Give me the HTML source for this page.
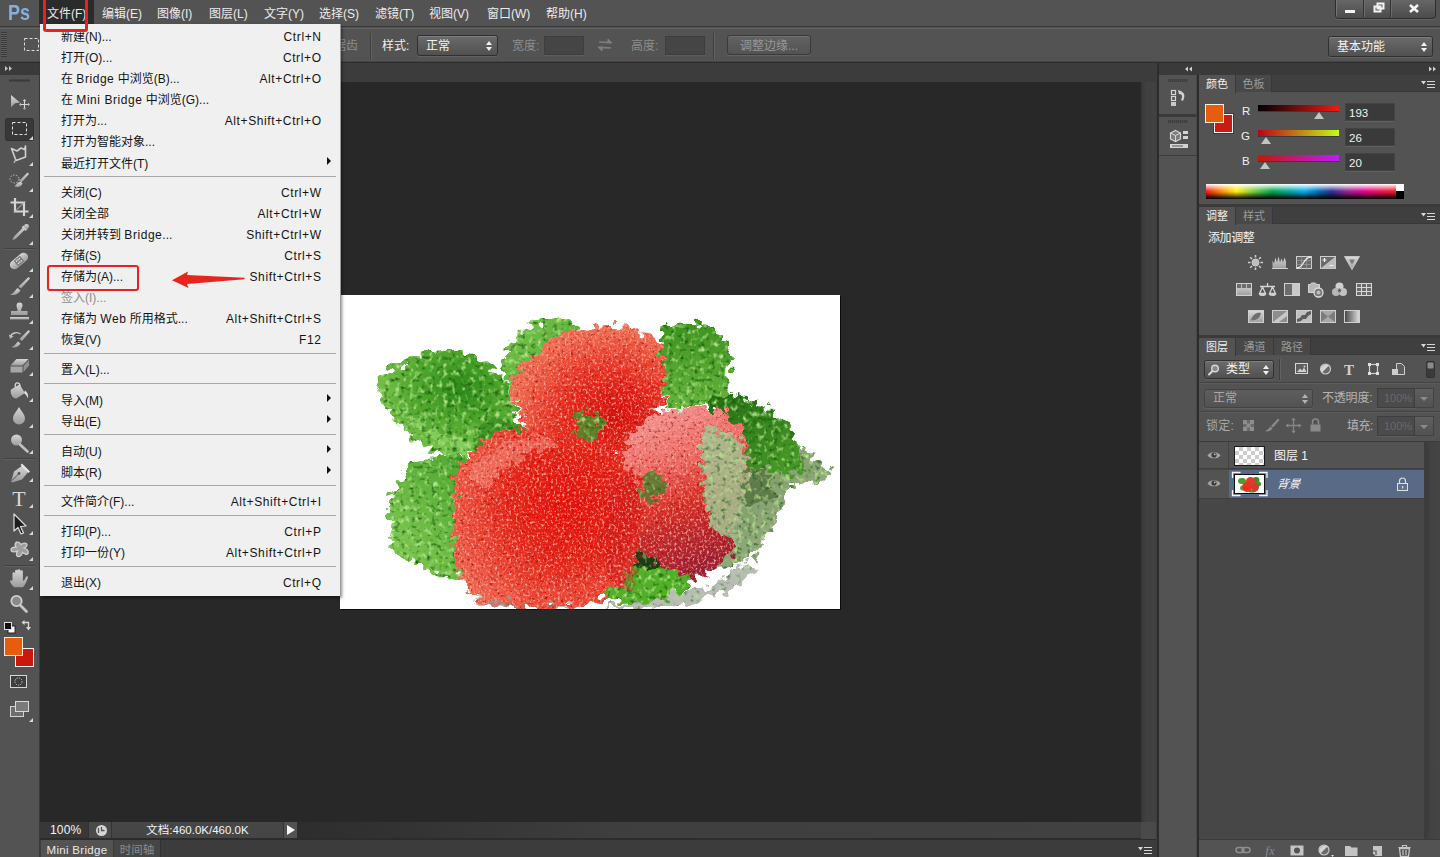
<!DOCTYPE html>
<html lang="zh-CN">
<head>
<meta charset="utf-8">
<title>Photoshop</title>
<style>
*{box-sizing:border-box;margin:0;padding:0}
html,body{width:1440px;height:857px;overflow:hidden;background:#535353}
body{position:relative;font-family:"Liberation Sans","Noto Sans CJK SC",sans-serif;font-size:12px;color:#e6e6e6;line-height:1}
.abs{position:absolute}
#menubar{position:absolute;left:0;top:0;width:1440px;height:27px;background:#535353;border-bottom:1px solid #3a3a3a}
#menubar .mi{position:absolute;top:1px;height:26px;line-height:26px;font-size:12px;color:#ececec;white-space:nowrap}
#optbar{position:absolute;left:0;top:28px;width:1440px;height:34px;background:#535353;border-top:1px solid #636363;border-bottom:1px solid #454545}
#optline{position:absolute;left:0;top:62px;width:1440px;height:1px;background:#2e2e2e}
#toolbar{position:absolute;left:0;top:63px;width:39px;height:794px;background:#535353}
#toolhead{position:absolute;left:0;top:63px;width:39px;height:12px;background:#3a3a3a}
#tabstrip{position:absolute;left:40px;top:63px;width:1116px;height:19px;background:#3c3c3c}
#canvas{position:absolute;left:40px;top:82px;width:1101px;height:740px;background:#282828}
#vscroll{position:absolute;left:1141px;top:82px;width:15px;height:740px;background:linear-gradient(90deg,#363636,#414141 5px,#414141)}
#statusbar{position:absolute;left:40px;top:822px;width:1116px;height:17px;background:#424242}
#bottomtabs{position:absolute;left:40px;top:839px;width:1116px;height:18px;background:#3a3a3a}
#docimg{position:absolute;left:340px;top:295px;width:500px;height:314px;background:#fff;box-shadow:1px 1px 0 #0c0c0c}
#dockgap{position:absolute;left:1156px;top:63px;width:3px;height:794px;background:#2c2c2c;border-left:1px solid #3e3e3e}
#dockhead{position:absolute;left:1159px;top:63px;width:281px;height:12px;background:#3a3a3a}
#iconcol{position:absolute;left:1159px;top:75px;width:37px;height:782px;background:#535353}
#dockgap2{position:absolute;left:1196px;top:75px;width:3px;height:782px;background:#2c2c2c;border-left:1px solid #484848}
#panels{position:absolute;left:1199px;top:75px;width:241px;height:782px;background:#535353}
#filemenu{position:absolute;left:40px;top:24px;width:300px;height:572px;background:#f0f0f0;box-shadow:1px 0 0 #9a9a9a, 2px 2px 3px rgba(0,0,0,.45);color:#111;font-size:12px}
#filemenu .it{position:absolute;left:21px;height:21px;line-height:21px;white-space:nowrap;color:#141414}
#filemenu .sc{position:absolute;right:18.400px;letter-spacing:.62px;height:21px;line-height:21px;white-space:nowrap;text-align:right;color:#141414}
#filemenu .sep{position:absolute;left:4px;right:4px;height:1px;background:#a8a8a8}
#filemenu .l{letter-spacing:.55px}
#filemenu .arr{position:absolute;right:9px;width:0;height:0;border-left:4px solid #111;border-top:4px solid transparent;border-bottom:4px solid transparent}
</style>
</head>
<body>
<div id="menubar">
  <div class="abs" style="left:8px;top:1px;font-size:22px;font-weight:bold;color:#86b0dc;line-height:24px;transform:scaleX(.82);transform-origin:0 0;font-family:'Liberation Sans',sans-serif">Ps</div>
  <div class="abs" style="left:39px;top:0;width:55px;height:24px;background:#2b2b2b"></div>
  <div class="mi" style="left:47px">文件(F)</div>
  <div class="mi" style="left:102px">编辑(E)</div>
  <div class="mi" style="left:157px">图像(I)</div>
  <div class="mi" style="left:209px">图层(L)</div>
  <div class="mi" style="left:264px">文字(Y)</div>
  <div class="mi" style="left:319px">选择(S)</div>
  <div class="mi" style="left:375px">滤镜(T)</div>
  <div class="mi" style="left:429px">视图(V)</div>
  <div class="mi" style="left:487px">窗口(W)</div>
  <div class="mi" style="left:546px">帮助(H)</div>
</div>
<div id="optbar"></div>
<div id="optline"></div>
<div id="toolbar"></div>
<div id="toolhead"></div>
<div id="tabstrip"></div>
<div id="canvas"></div>
<div id="vscroll"></div>
<div id="statusbar"></div>
<div id="bottomtabs"></div>
<div id="dockgap"></div>
<div id="dockhead"></div>
<div id="iconcol"></div>
<div id="dockgap2"></div>
<div id="panels"></div>
<style>
.sel{position:absolute;border:1px solid #303030;border-radius:2.500px;background:linear-gradient(#6b6b6b,#505050);box-shadow:inset 0 1px 0 #7e7e7e,0 1px 0 #626262;color:#f2f2f2;font-size:12px;white-space:nowrap}
.sel .ud{position:absolute;right:5px;top:50%;width:6px;height:10px;margin-top:-5px}
.sel .ud:before{content:"";position:absolute;left:0;top:0;border-left:3px solid transparent;border-right:3px solid transparent;border-bottom:4px solid #f0f0f0}
.sel .ud:after{content:"";position:absolute;left:0;bottom:0;border-left:3px solid transparent;border-right:3px solid transparent;border-top:4px solid #f0f0f0}
.inp{position:absolute;background:#454545;border:1px solid #3e3e3e;box-shadow:0 1px 0 #5e5e5e}
.vsep{position:absolute;width:2px;border-left:1px solid #3f3f3f;border-right:1px solid #626262}
.lbl{position:absolute;white-space:nowrap;font-size:12px;line-height:14px}
.dis{color:#8d8d8d}
.winbtns{position:absolute;left:1335px;top:0;width:101px;height:19px;border:1px solid #2d2d2d;border-top:none;border-radius:0 0 4px 4px;background:linear-gradient(#666,#4b4b4b);box-shadow:0 1px 0 #646464,inset 1px 0 0 #757575}
.winbtns i{position:absolute;top:0;width:1px;height:17px;background:#333;box-shadow:1px 0 0 #6c6c6c}
</style>
<!-- window buttons -->
<div class="winbtns">
  <i style="left:27px"></i><i style="left:54px"></i>
  <svg class="abs" style="left:0;top:0" width="100" height="18" viewBox="0 0 100 18">
    <rect x="9" y="10" width="10" height="3" fill="#f4f4f4"/>
    <path d="M38.5 6.5h6v5h-6zM41.5 3.5h6v5h-6z" fill="none" stroke="#f4f4f4" stroke-width="2"/>
    <path d="M74 5l8 7M82 5l-8 7" stroke="#f4f4f4" stroke-width="2.6" fill="none"/>
  </svg>
</div>
<!-- options bar content -->
<div class="abs" style="left:1px;top:32px;width:6px;height:25px;background:repeating-linear-gradient(#3a3a3a 0 1px,#5c5c5c 1px 2px)"></div>
<svg class="abs" style="left:22px;top:36px" width="18" height="18" viewBox="0 0 18 18"><rect x="2.5" y="2.5" width="14" height="12" fill="none" stroke="#dcdcdc" stroke-width="1" stroke-dasharray="3 2"/></svg>
<div class="lbl dis" style="left:334px;top:39px">锯齿</div>
<div class="vsep" style="left:370px;top:33px;height:26px"></div>
<div class="lbl" style="left:382px;top:39px;color:#f0f0f0">样式:</div>
<div class="sel" style="left:417px;top:35px;width:81px;height:21px;line-height:21px;padding-left:8px">正常<span class="ud"></span></div>
<div class="lbl dis" style="left:512px;top:39px">宽度:</div>
<div class="inp" style="left:544px;top:36px;width:40px;height:19px"></div>
<svg class="abs" style="left:596px;top:37px" width="18" height="16" viewBox="0 0 18 16"><path d="M3 5h9V2l4 4-4 0zM15 11H6v3l-4-4 4 0z" fill="#7e7e7e" stroke="#7e7e7e" stroke-width="1"/></svg>
<div class="lbl dis" style="left:631px;top:39px">高度:</div>
<div class="inp" style="left:665px;top:36px;width:40px;height:19px"></div>
<div class="vsep" style="left:713px;top:33px;height:26px"></div>
<div class="abs" style="left:727px;top:35px;width:84px;height:20px;border:1px solid #3a3a3a;border-radius:3px;background:linear-gradient(#626262,#535353);box-shadow:0 1px 0 #626262,inset 0 1px 0 #707070;color:#979797;font-size:12px;line-height:20px;text-align:center;white-space:nowrap">调整边缘...</div>
<div class="sel" style="left:1328px;top:36px;width:105px;height:21px;line-height:21px;padding-left:8px">基本功能<span class="ud"></span></div>
<!-- left toolbar -->
<svg class="abs" style="left:0;top:63px" width="40" height="794" viewBox="0 63 40 794">
  <defs>
    <path id="corner" d="M0 0v-4l-4 4z" fill="#d8d8d8"/>
    <linearGradient id="icg" x1="0" y1="0" x2="0" y2="1"><stop offset="0" stop-color="#d6d6d6"/><stop offset="1" stop-color="#9c9c9c"/></linearGradient>
  </defs>
  <!-- header arrows -->
  <path d="M5 66l3 2.500-3 2.500zM9 66l3 2.500-3 2.500z" fill="#c4c4c4"/>
  <!-- right border -->
  <rect x="39" y="63" width="1" height="794" fill="#3a3a3a"/>
  <!-- grip -->
  <rect x="9" y="79" width="21" height="3" fill="#454545"/>
  <rect x="9" y="80" width="21" height="1" fill="#3a3a3a"/>
  <!-- selected tool bg -->
  <rect x="5" y="118" width="29" height="23" rx="3" fill="#383838"/>
  <rect x="5.5" y="118.5" width="28" height="22" rx="3" fill="none" stroke="#303030"/>
  <!-- separators -->
  <g fill="#414141"><rect x="4" y="248" width="31" height="1"/><rect x="4" y="458" width="31" height="1"/><rect x="4" y="565" width="31" height="1"/></g>
  <g fill="#606060"><rect x="4" y="249" width="31" height="1"/><rect x="4" y="459" width="31" height="1"/><rect x="4" y="566" width="31" height="1"/></g>
  <g fill="url(#icg)" stroke="none">
    <!-- move -->
    <path d="M11 95l9 7.5-5 .8-4 4z"/>
    <path d="M24.5 100v9M20 104.500h9" stroke="#d6d6d6" stroke-width="1.2" fill="none"/>
    <path d="M24.500 99l1.800 2h-3.600zM24.500 110l1.800-2h-3.600zM19 104.500l2-1.800v3.600zM30 104.500l-2-1.800v3.600z"/>
    <!-- marquee -->
    <rect x="12.500" y="122.500" width="14" height="12" fill="none" stroke="#e0e0e0" stroke-dasharray="3 2"/>
    <use href="#corner" x="33" y="140"/>
    <!-- lasso -->
    <path d="M11.500 148.500l5.500 2.500 4-3 3.500 1.500 1-3.500 0 11-9.500 3.500z" fill="none" stroke="#cfcfcf" stroke-width="1.600" stroke-linejoin="round"/>
    <path d="M16 159l-2 4" stroke="#bdbdbd" stroke-width="1.300" fill="none"/>
    <use href="#corner" x="33" y="166"/>
    <!-- quick select -->
    <ellipse cx="14.500" cy="179" rx="4.500" ry="4" fill="none" stroke="#c4c4c4" stroke-dasharray="1.500 1.500"/>
    <path d="M27.500 172.500l1.500 1.500-7.500 8.500-2.500-1.500z"/>
    <path d="M14.500 186.500c2-3 4-5 6.500-4.500l1.500 1.500c-1 3-4 4-8 3z"/>
    <use href="#corner" x="33" y="192"/>
    <!-- crop -->
    <path d="M15 198v13.500h13.500M10.500 202.500h13.500v13.500" fill="none" stroke="#d4d4d4" stroke-width="2.200"/>
    <path d="M14 212.500l11-11" stroke="#bcbcbc" stroke-width="1" fill="none"/>
    <use href="#corner" x="33" y="218"/>
    <!-- eyedropper -->
    <path d="M24 225.500l3.500 3.500-2 2-1-1-8.500 8.500-3 1.500-.5-.5 1.500-3 8.500-8.500-1-1z"/>
    <circle cx="26.500" cy="226.500" r="2.400"/>
    <use href="#corner" x="33" y="245"/>
    <!-- healing brush (bandage) -->
    <g transform="rotate(-40 19 261)"><rect x="8.500" y="256.500" width="21" height="9" rx="4.500"/><rect x="15" y="257.500" width="8" height="7" fill="#7a7a7a"/><g fill="#e2e2e2"><circle cx="17" cy="259.500" r=".8"/><circle cx="19" cy="259.500" r=".8"/><circle cx="21" cy="259.500" r=".8"/><circle cx="17" cy="262.500" r=".8"/><circle cx="19" cy="262.500" r=".8"/><circle cx="21" cy="262.500" r=".8"/></g></g>
    <use href="#corner" x="33" y="272"/>
    <!-- brush -->
    <path d="M28.500 277l1.500 1.500-9 10-2.500-2z"/>
    <path d="M10 294.500c3-.5 4.500-3.500 7.500-6.500l3 2.500c-2 3.500-6 5.500-10.500 4z"/>
    <use href="#corner" x="33" y="298"/>
    <!-- stamp -->
    <path d="M16.500 305.500a3 3 0 1 1 6 0c0 2-1.500 3-1.500 5.500h6.500v4h-16.500v-4h6.500c0-2.500-1-3.500-1-5.500z"/>
    <rect x="10" y="317" width="19" height="2.500"/>
    <use href="#corner" x="33" y="324"/>
    <!-- history brush -->
    <path d="M28.500 330l1.500 1.500-8 9.500-2.500-2z"/>
    <path d="M11.500 347c3-.5 4-3 6.500-5.500l2.500 2c-1.500 3-5 5-9 3.500z"/>
    <path d="M10.500 337a6 5 0 0 1 10-3" fill="none" stroke="#c8c8c8" stroke-width="1.400"/>
    <path d="M9 334.500l1 4.500 3.500-2.500z"/>
    <use href="#corner" x="33" y="350"/>
    <!-- eraser -->
    <path d="M10.500 365.500l6-6.500h12l-6 6.500z"/>
    <path d="M10.500 366.500h12v6h-12z" fill="#a6a6a6"/>
    <path d="M23.500 366l5.500-6v5.500l-5.500 6.500z" fill="#8f8f8f"/>
    <use href="#corner" x="33" y="376"/>
    <!-- paint bucket -->
    <path d="M11 389.500l8.500-5 5.500 8.500-8.500 5.500c-3 1-7-5-5.500-9z"/>
    <path d="M15.500 387.500c-2-6 5-6 4.500-1" fill="none" stroke="#d8d8d8" stroke-width="1.300"/>
    <path d="M25 390.500c2.500 1.500 3.500 4.500 3 8-1-2.500-2.500-4.500-4-5.500z" fill="#dedede"/>
    <use href="#corner" x="33" y="402"/>
    <!-- blur drop -->
    <path d="M19 407c2.500 4.500 6 7.500 6 11.500a6 6 0 0 1-12 0c0-4 3.500-7 6-11.500z"/>
    <use href="#corner" x="33" y="428"/>
    <!-- dodge -->
    <circle cx="16.500" cy="440" r="5.500"/>
    <path d="M20 444.500l7.500 7" stroke="#c2c2c2" stroke-width="2.600" fill="none" stroke-linecap="round"/>
    <use href="#corner" x="33" y="454"/>
    <!-- pen -->
    <path d="M11 481.500l3-10 8.500-6 6 6-6.500 8-10 3z"/>
    <path d="M11 481.500l7.500-7.500" stroke="#555" stroke-width="1" fill="none"/>
    <circle cx="19" cy="473.500" r="1.400" fill="#555"/>
    <path d="M22 463.500l8 8-1.500 1.500-8-8z" fill="#e6e6e6"/>
    <use href="#corner" x="33" y="482"/>
    <!-- shape (custom blob) -->
    <path d="M16 543c2-2 4 0 5 1.500 2-2 6-2 6 .5 0 2-2 2.500-3 3 3 1 5 3 4 5.500-1.500 2-4 0-5.500-1-.5 3-3.500 5-5.500 3.500-1.500-1.500 0-3.500 .5-5-2 1-6 1.500-6.500-1-.5-2.500 3-3 5-3-1-1.500-1.500-3 0-4.500z" fill="#9e9e9e" stroke="#cfcfcf" stroke-width="1.300"/>
    <use href="#corner" x="33" y="561"/>
    <!-- hand -->
    <path d="M13.500 580.500v-7a1.300 1.300 0 0 1 2.600 0v-2.500a1.300 1.300 0 0 1 2.600 0v-.5a1.300 1.300 0 0 1 2.600 0v1a1.300 1.300 0 0 1 2.600 0v7.500c0 3.500 1.500 1.500 3-2 .8-1.500 2.500-.8 2 .8-1.500 4-2.500 7-5 9.500h-8.500c-2.500-2-4.500-5-4.500-6.800z" transform="translate(-1 0)"/>
    <use href="#corner" x="33" y="590"/>
    <!-- zoom -->
    <circle cx="16.500" cy="601" r="5.200" fill="#8a8a8a" stroke="#cfcfcf" stroke-width="1.800"/>
    <path d="M20.500 605.500l6 6" stroke="#c6c6c6" stroke-width="2.800" fill="none" stroke-linecap="round"/>
  </g>
  <!-- type tool -->
  <text x="19" y="506" font-family="Liberation Serif,serif" font-size="22" fill="#d8d8d8" text-anchor="middle">T</text>
  <use href="#corner" x="33" y="508"/>
  <!-- path selection arrow -->
  <path d="M14 514v17l4-3.500 3 6.500 2.500-1-3-6.500 5.500-.5z" fill="#1c1c1c" stroke="#dcdcdc" stroke-width="1.200" stroke-linejoin="round"/>
  <use href="#corner" x="33" y="535"/>
  <!-- default colours / swap -->
  <rect x="8" y="626" width="7" height="7" fill="#fff" stroke="#222" stroke-width="1"/>
  <rect x="4.500" y="622.500" width="7" height="7" fill="#111" stroke="#ddd" stroke-width="1"/>
  <path d="M24 622.500h4.500v5" fill="none" stroke="#d8d8d8" stroke-width="1.300"/>
  <path d="M24.500 620l-3 2.500 3 2.500zM26 627l2.500 3.500 2.500-3.500z" fill="#d8d8d8"/>
  <!-- bg / fg colour -->
  <rect x="15.500" y="648.500" width="18" height="18" fill="#c9190f" stroke="#f2f2f2"/>
  <rect x="16.500" y="649.500" width="16" height="16" fill="none" stroke="#2a2a2a" stroke-width="0"/>
  <rect x="4.500" y="637.500" width="18" height="18" fill="#e85c0d" stroke="#f4e6d8"/>
  <!-- quick mask -->
  <rect x="10.500" y="675.500" width="16" height="12" fill="#3e3e3e" stroke="#d6d6d6"/>
  <circle cx="18.500" cy="681.500" r="3.600" fill="none" stroke="#d0d0d0" stroke-dasharray="1.200 1.200"/>
  <!-- screen mode -->
  <rect x="10.500" y="706.500" width="13" height="10" fill="#6e6e6e" stroke="#d2d2d2"/>
  <rect x="15.500" y="701.500" width="13" height="10" fill="#7a7a7a" stroke="#dadada"/>
  <use href="#corner" x="33" y="722"/>
</svg>
<!-- status bar -->
<div class="abs" style="left:297px;top:822px;width:844px;height:17px;background:linear-gradient(90deg,#2d2d2d,#3f3f3f 40%,#414141)"></div>
<div class="abs" style="left:40px;top:822px;width:48px;height:17px;background:#383838;color:#f4f4f4;font-size:12px;line-height:16px;padding-left:10px;letter-spacing:.2px">100%</div>
<div class="abs" style="left:88px;top:822px;width:24px;height:17px;background:#4a4a4a;border-left:1px solid #333;border-right:1px solid #333"></div>
<svg class="abs" style="left:95px;top:824px" width="13" height="13" viewBox="0 0 13 13"><circle cx="6.500" cy="6.500" r="5.500" fill="#d6d6d6"/><path d="M6.500 3v3.500h3" stroke="#555" stroke-width="1.300" fill="none"/><path d="M3.500 4v5" stroke="#555" stroke-width="1.300"/></svg>
<div class="abs" style="left:112px;top:822px;width:171px;height:17px;background:#464646;color:#f4f4f4;font-size:11.500px;line-height:17px;text-align:center;white-space:nowrap">文档:460.0K/460.0K</div>
<div class="abs" style="left:283px;top:822px;width:14px;height:17px;background:#525252;border-left:1px solid #333"></div>
<div class="abs" style="left:287px;top:825px;width:0;height:0;border-left:8px solid #f6f6f6;border-top:5.500px solid transparent;border-bottom:5.500px solid transparent"></div>
<div class="abs" style="left:40px;top:838px;width:1116px;height:2px;background:#2c2c2c"></div>
<!-- bottom tabs -->
<div class="abs" style="left:40px;top:840px;width:1116px;height:17px;background:#3c3c3c"></div>
<div class="abs" style="left:41px;top:840px;width:72px;height:17px;background:#535353;color:#e8e8e8;font-size:11.500px;line-height:21px;text-align:center;white-space:nowrap;letter-spacing:.3px">Mini Bridge</div>
<div class="abs" style="left:114px;top:840px;width:47px;height:17px;background:#464646;color:#8c8c8c;font-size:11.500px;line-height:21px;text-align:center;white-space:nowrap;border-right:1px solid #333">时间轴</div>
<svg class="abs" style="left:1138px;top:846px" width="14" height="9" viewBox="0 0 14 9"><path d="M0 1h5l-2.500 3.500z" fill="#d8d8d8"/><path d="M6 1.500h8M6 4.500h8M6 7.500h8" stroke="#d8d8d8" stroke-width="1.200"/></svg>
<div class="abs" style="left:1141px;top:822px;width:15px;height:17px;background:#4a4a4a"></div>
<div id="docimg"></div>
<svg class="abs" style="left:340px;top:295px" width="500" height="314" viewBox="340 295 500 314">
  <defs>
    <filter id="glassL" x="340" y="295" width="500" height="314" filterUnits="userSpaceOnUse" color-interpolation-filters="sRGB">
      <feTurbulence type="fractalNoise" baseFrequency="0.035" numOctaves="2" seed="4" result="n1"/>
      <feDisplacementMap in="SourceGraphic" in2="n1" scale="14" xChannelSelector="R" yChannelSelector="G" result="d1"/>
      <feTurbulence type="fractalNoise" baseFrequency="0.13 0.16" numOctaves="1" seed="11" result="n2"/>
      <feDisplacementMap in="d1" in2="n2" scale="24" xChannelSelector="G" yChannelSelector="R" result="d2"/>
      <feTurbulence type="fractalNoise" baseFrequency="0.21 0.17" numOctaves="2" seed="7" result="g"/>
      <feColorMatrix in="g" type="matrix" values="0 0 0 0 .72  0 0 0 0 .9  0 0 0 0 .55  0 0 0 3.0 -1.6" result="ga"/>
      <feComposite in="ga" in2="d2" operator="in" result="gm"/>
      <feTurbulence type="fractalNoise" baseFrequency="0.19 0.23" numOctaves="2" seed="23" result="g2"/>
      <feColorMatrix in="g2" type="matrix" values="0 0 0 0 .08  0 0 0 0 .36  0 0 0 0 .05  0 0 0 2.8 -1.55" result="gb"/>
      <feComposite in="gb" in2="d2" operator="in" result="gd"/>
      <feMerge><feMergeNode in="d2"/><feMergeNode in="gd"/><feMergeNode in="gm"/></feMerge>
    </filter>
    <filter id="glassB" x="340" y="295" width="500" height="314" filterUnits="userSpaceOnUse" color-interpolation-filters="sRGB">
      <feTurbulence type="fractalNoise" baseFrequency="0.035" numOctaves="2" seed="4" result="n1"/>
      <feDisplacementMap in="SourceGraphic" in2="n1" scale="14" xChannelSelector="R" yChannelSelector="G" result="d1"/>
      <feTurbulence type="fractalNoise" baseFrequency="0.13 0.16" numOctaves="1" seed="11" result="n2"/>
      <feDisplacementMap in="d1" in2="n2" scale="24" xChannelSelector="G" yChannelSelector="R" result="d2"/>
      <feTurbulence type="fractalNoise" baseFrequency="0.43 0.37" numOctaves="2" seed="9" result="g"/>
      <feColorMatrix in="g" type="matrix" values="0 0 0 0 .98  0 0 0 0 .66  0 0 0 0 .6  0 0 0 3.2 -1.62" result="ga"/>
      <feComposite in="ga" in2="d2" operator="in" result="gm"/>
      <feTurbulence type="fractalNoise" baseFrequency="0.31 0.36" numOctaves="2" seed="31" result="g2"/>
      <feColorMatrix in="g2" type="matrix" values="0 0 0 0 .62  0 0 0 0 .04  0 0 0 0 .04  0 0 0 2.8 -1.6" result="gb"/>
      <feComposite in="gb" in2="d2" operator="in" result="gd"/>
      <feMerge><feMergeNode in="d2"/><feMergeNode in="gd"/><feMergeNode in="gm"/></feMerge>
    </filter>
    <radialGradient id="leafA" cx="0.62" cy="0.35" r="0.75"><stop offset="0" stop-color="#2c8a1a"/><stop offset=".45" stop-color="#4fa62c"/><stop offset="1" stop-color="#8ad05a"/></radialGradient>
    <linearGradient id="leafB" x1="1" y1="0" x2="0" y2="1"><stop offset="0" stop-color="#4aa22a"/><stop offset="1" stop-color="#84cc58"/></linearGradient>
    <linearGradient id="leafC" x1="0" y1="0" x2="1" y2="1"><stop offset="0" stop-color="#7cc850"/><stop offset="1" stop-color="#4a9e2c"/></linearGradient>
    <linearGradient id="leafD" x1="0" y1="0" x2="0" y2="1"><stop offset="0" stop-color="#3d9220"/><stop offset="1" stop-color="#66b43c"/></linearGradient>
    <linearGradient id="leafE" x1="0" y1="0" x2="1" y2="1"><stop offset="0" stop-color="#226f12"/><stop offset="1" stop-color="#4c9c2a"/></linearGradient>
    <radialGradient id="sTop" cx="0.66" cy="0.72" r="0.75"><stop offset="0" stop-color="#d4100c"/><stop offset=".4" stop-color="#e6281c"/><stop offset=".8" stop-color="#ee5c44"/><stop offset="1" stop-color="#f0785c"/></radialGradient>
    <radialGradient id="sFront" cx="0.62" cy="0.42" r="0.7"><stop offset="0" stop-color="#e8100a"/><stop offset=".45" stop-color="#e62418"/><stop offset=".85" stop-color="#ee5440"/><stop offset="1" stop-color="#f06a52"/></radialGradient>
    <linearGradient id="sRight" x1="0.2" y1="0" x2="0.5" y2="1"><stop offset="0" stop-color="#f29a98"/><stop offset=".35" stop-color="#ee6c66"/><stop offset=".6" stop-color="#d83028"/><stop offset="1" stop-color="#9a2034"/></linearGradient>
    <linearGradient id="grey" x1="0" y1="0" x2="1" y2="1"><stop offset="0" stop-color="#9cc488"/><stop offset=".5" stop-color="#86a070"/><stop offset="1" stop-color="#a8b898"/></linearGradient>
  </defs>
  <g filter="url(#glassL)">
    <!-- leaves -->
    <path d="M376 389C384 366 404 355 430 354C456 348 486 356 499 372C513 386 517 405 508 421C500 432 492 440 480 446C466 456 446 458 434 450C414 440 395 421 385 408Z" fill="url(#leafA)"/>
    <path d="M400 412C420 430 445 445 470 452L470 440C440 435 415 420 395 400Z" fill="#92d468" opacity=".7"/>
    <path d="M404 472C420 455 452 450 476 458L478 572C450 582 410 571 395 546C385 521 390 492 404 472Z" fill="url(#leafB)"/>
    <path d="M505 374C504 346 524 323 554 318C570 319 581 330 579 346L562 396L514 398Z" fill="url(#leafC)"/>
    <path d="M660 331C680 318 716 321 727 340C736 360 733 386 722 402L664 408Z" fill="url(#leafD)"/>
    <path d="M596 580C618 563 662 559 696 571C701 586 673 600 640 604C612 606 590 599 596 580Z" fill="#52b028"/>
    <path d="M480 420C500 415 530 420 545 440L520 470L470 460Z" fill="#3f9424"/>
    <!-- grey glass region -->
    <path d="M690 432C735 418 790 440 828 468C838 478 826 486 806 480C790 490 778 505 769 530C758 560 722 574 698 562Z" fill="url(#grey)"/>
    <path d="M735 470C750 460 770 470 775 490C770 505 750 510 740 500Z" fill="#4e6a3c" opacity=".7"/>
    <path d="M606 540C628 530 662 536 680 552L652 572L612 568Z" fill="#1f3a16"/>
    <path d="M712 396C740 391 771 404 786 425C799 441 806 458 800 472C784 480 748 466 728 449Z" fill="url(#leafE)"/>
  </g>
  <g filter="url(#glassB)">
    <!-- strawberries -->
    <path d="M615 440L650 430L660 470L625 480Z" fill="#d8342a"/>
    <path d="M514 380C522 352 556 330 610 326C640 325 662 336 665 360C668 396 656 430 626 449C600 457 560 446 534 431C515 416 509 400 514 380Z" fill="url(#sTop)"/>
    <path d="M627 442C640 415 680 400 716 408C741 416 751 441 748 471C745 511 736 551 716 571C690 582 660 571 640 546C624 516 621 471 627 442Z" fill="url(#sRight)"/>
    <path d="M454 502C454 461 480 433 520 428C562 424 612 440 636 476C649 511 644 555 622 584C596 610 532 615 492 607C460 597 451 548 454 502Z" fill="url(#sFront)"/>
    <path d="M632 470C645 500 645 560 628 590C615 600 600 570 605 530C610 500 620 480 632 470Z" fill="#c4141c" opacity=".38"/>
    <path d="M470 470C490 445 530 435 560 440C530 450 500 470 480 500Z" fill="#f48c7c" opacity=".55"/>
  </g>
  <g filter="url(#glassL)">
    <path d="M574 416C584 406 598 411 602 423C600 435 588 441 578 435Z" fill="#4e8e2c" opacity=".85"/>
    <path d="M700 430C725 425 748 440 748 471C746 500 742 525 735 545C715 540 700 500 700 470Z" fill="#a4c294" opacity=".85"/>
    <path d="M640 478C650 470 664 474 668 486C664 498 650 502 642 494Z" fill="#4a7e2a" opacity=".8"/>
    <!-- bottom reflections -->
    <path d="M470 598C480 606 490 608 500 609L500 604Z" fill="#9a9a96" opacity=".6"/>
    <path d="M500 602C540 609 600 611 640 602C680 597 720 582 748 560L756 570C724 596 682 607 640 610C600 614 540 614 500 609Z" fill="#8a8f86" opacity=".6"/>
  </g>
</svg>
<style>
.ptabs{position:absolute;left:1199px;width:241px;height:17px;background:#3f3f3f;border-bottom:1px solid #383838}
.ptab{position:absolute;top:0;height:18px;line-height:19px;font-size:11px;text-align:center;white-space:nowrap}
.ptab.on{background:#535353;color:#f0f0f0;border-right:1px solid #383838}
.ptab.off{background:#484848;color:#9c9c9c;border-right:1px solid #383838;height:17px}
.pmenu{position:absolute;left:1421px;width:14px;height:9px}
.psep{position:absolute;left:1199px;width:241px;height:3px;background:#3a3a3a}
.num{position:absolute;left:1345px;width:50px;height:18px;background:#3a3a3a;border:1px solid #434343;box-shadow:0 1px 0 #5f5f5f;color:#f2f2f2;font-size:11.500px;line-height:19px;padding-left:3px}
.thumbtri{position:absolute;width:0;height:0;border-left:5px solid transparent;border-right:5px solid transparent;border-bottom:7px solid #c4c4c4}
</style>
<!-- dock header arrows -->
<svg class="abs" style="left:1159px;top:63px" width="281" height="12" viewBox="0 0 281 12">
  <path d="M33 3.500l-3 2.500 3 2.500zM29 3.500l-3 2.500 3 2.500z" fill="#d0d0d0"/>
  <path d="M270 3.500l3 2.500-3 2.500zM274 3.500l3 2.500-3 2.500z" fill="#d0d0d0"/>
</svg>
<!-- icon column -->
<div class="abs" style="left:1159px;top:75px;width:37px;height:40px;background:#535353;border-bottom:1px solid #3a3a3a;box-shadow:0 1px 0 #3a3a3a"></div>
<div class="abs" style="left:1159px;top:115px;width:37px;height:2px;background:#3a3a3a"></div>
<div class="abs" style="left:1159px;top:155px;width:37px;height:1px;background:#3a3a3a"></div>
<div class="abs" style="left:1168px;top:79px;width:20px;height:3px;background:repeating-linear-gradient(90deg,#3e3e3e 0 1px,#4a4a4a 1px 2px)"></div>
<div class="abs" style="left:1168px;top:120px;width:20px;height:3px;background:repeating-linear-gradient(90deg,#3e3e3e 0 1px,#4a4a4a 1px 2px)"></div>
<svg class="abs" style="left:1167px;top:87px" width="24" height="22" viewBox="0 0 24 22">
  <g fill="none" stroke="#d6d6d6" stroke-width="1.200"><rect x="4.500" y="3.500" width="4" height="4"/><rect x="4.500" y="9.500" width="4" height="4"/></g>
  <rect x="4" y="15" width="5" height="4" fill="#c8c8c8"/>
  <path d="M12 5c5-1 7 3 4 9l-2-1c2-4 1-6-2-6z" fill="#d2d2d2"/><path d="M11 3l4 1.500-3 3z" fill="#d2d2d2"/>
</svg>
<svg class="abs" style="left:1166px;top:127px" width="26" height="24" viewBox="0 0 26 24">
  <path d="M9.500 3.500l5 2.500v6l-5 2.500-5-2.500v-6z" fill="#7c7c7c" stroke="#d8d8d8" stroke-width="1.200"/><path d="M4.500 6l5 2.500 5-2.500M9.500 8.500v6" stroke="#d8d8d8" fill="none"/>
  <g fill="#d4d4d4"><rect x="17" y="4" width="5" height="3"/><rect x="17" y="9" width="5" height="3"/><rect x="4" y="17" width="18" height="4"/></g><rect x="6" y="18.500" width="11" height="1" fill="#555"/>
</svg>

<!-- ============ COLOR PANEL ============ -->
<div class="ptabs" style="top:75px"></div>
<div class="ptab on" style="left:1199px;top:75px;width:37px">颜色</div>
<div class="ptab off" style="left:1236px;top:75px;width:36px">色板</div>
<svg class="pmenu" style="top:80px" viewBox="0 0 14 9"><path d="M0 1h5l-2.500 3.500z" fill="#d8d8d8"/><path d="M6 1.500h8M6 4.500h8M6 7.500h8" stroke="#d8d8d8" stroke-width="1.200"/></svg>
<!-- swatches -->
<div class="abs" style="left:1214px;top:114px;width:19px;height:19px;background:#ca1b12;border:1px solid #f4f4f4;box-shadow:0 0 0 1px #3c3c3c"></div>
<div class="abs" style="left:1205px;top:104px;width:19px;height:19px;background:#e85c0d;border:1px solid #fbeedd"></div>
<div class="lbl" style="left:1242px;top:104px;color:#f0f0f0;font-size:11.500px">R</div>
<div class="lbl" style="left:1241px;top:129px;color:#f0f0f0;font-size:11.500px">G</div>
<div class="lbl" style="left:1242px;top:154px;color:#f0f0f0;font-size:11.500px">B</div>
<div class="abs" style="left:1258px;top:105px;width:81px;height:6px;background:linear-gradient(90deg,#000,#f01a14);box-shadow:0 1px 0 #3a3a3a"></div>
<div class="abs" style="left:1258px;top:130px;width:81px;height:6px;background:linear-gradient(90deg,#c10014,#c1ff14);box-shadow:0 1px 0 #3a3a3a"></div>
<div class="abs" style="left:1258px;top:155px;width:81px;height:6px;background:linear-gradient(90deg,#c11a00,#c11aff);box-shadow:0 1px 0 #3a3a3a"></div>
<div class="thumbtri" style="left:1314px;top:112px"></div>
<div class="thumbtri" style="left:1261px;top:137px"></div>
<div class="thumbtri" style="left:1260px;top:162px"></div>
<div class="num" style="top:103px">193</div>
<div class="num" style="top:128px">26</div>
<div class="num" style="top:153px">20</div>
<!-- spectrum -->
<div class="abs" style="left:1206px;top:184px;width:190px;height:15px;background:linear-gradient(90deg,#f21a1a 0%,#ff8a00 8%,#fff200 16%,#7ac943 25%,#00a651 35%,#00a99d 43%,#00aeef 52%,#0072bc 59%,#2e3192 66%,#92278f 74%,#ec008c 84%,#ed145b 92%,#ed1c24 100%)"></div>
<div class="abs" style="left:1206px;top:184px;width:190px;height:15px;background:linear-gradient(#fff 0%,rgba(255,255,255,0) 48%,rgba(0,0,0,0) 52%,#000 100%)"></div>
<div class="abs" style="left:1396px;top:184px;width:8px;height:7px;background:#fff"></div>
<div class="abs" style="left:1396px;top:191px;width:8px;height:8px;background:#000"></div>
<div class="psep" style="top:204px"></div>

<!-- ============ ADJUSTMENTS PANEL ============ -->
<div class="ptabs" style="top:207px"></div>
<div class="ptab on" style="left:1199px;top:207px;width:37px">调整</div>
<div class="ptab off" style="left:1236px;top:207px;width:37px">样式</div>
<svg class="pmenu" style="top:212px" viewBox="0 0 14 9"><path d="M0 1h5l-2.500 3.500z" fill="#d8d8d8"/><path d="M6 1.500h8M6 4.500h8M6 7.500h8" stroke="#d8d8d8" stroke-width="1.200"/></svg>
<div class="lbl" style="left:1208px;top:231px;color:#f4f4f4;font-size:12px;letter-spacing:-.4px">添加调整</div>
<svg class="abs" style="left:1199px;top:250px" width="241" height="80" viewBox="1199 250 241 80">
  <defs><linearGradient id="ag" x1="0" y1="0" x2="0" y2="1"><stop offset="0" stop-color="#dadada"/><stop offset="1" stop-color="#9e9e9e"/></linearGradient>
  <linearGradient id="agh" x1="0" y1="0" x2="1" y2="0"><stop offset="0" stop-color="#444"/><stop offset="1" stop-color="#e0e0e0"/></linearGradient></defs>
  <g stroke="#cfcfcf" fill="none" stroke-width="1">
    <!-- row1 -->
    <circle cx="1255.500" cy="262.500" r="3.500" fill="#bdbdbd"/><path d="M1255.500 255v2.500M1255.500 267.500v2.500M1248 262.500h2.500M1260.500 262.500h2.500M1250.200 257.200l1.800 1.800M1259 266l1.800 1.800M1250.200 267.800l1.800-1.800M1259 259l1.800-1.800" stroke-width="1.600"/>
    <path d="M1272.500 268.500v-8l1.500 3 1.500-6 1.500 5 1.500-6 1.500 6 1.500-4 1.500 4 1.500-5 1.500 4v7z" fill="url(#ag)" stroke="none"/><path d="M1272 268.500h16"/>
    <rect x="1296.500" y="256.500" width="15" height="12" fill="#6a6a6a"/><path d="M1296.500 260.500h15M1296.500 264.500h15M1301.500 256.500v12M1306.500 256.500v12" stroke="#9a9a9a" stroke-width=".7"/><path d="M1297 268c7 0 6-11 14-11" stroke="#f0f0f0" stroke-width="1.300"/>
    <rect x="1320.500" y="256.500" width="15" height="12" fill="#6a6a6a"/><path d="M1320.500 268.500l15-12v12z" fill="#bdbdbd" stroke="none"/><path d="M1322.500 260h4M1324.500 258v4M1329.500 265.500h4" stroke="#f2f2f2" stroke-width="1.200"/>
    <path d="M1344.500 256.500h15l-7.500 13z" fill="url(#ag)" stroke="#c6c6c6"/><path d="M1349 259.500h6l-3 5z" fill="#7a7a7a" stroke="none"/>
    <!-- row2 -->
    <rect x="1236.500" y="283.500" width="15" height="12" fill="url(#ag)"/><rect x="1237" y="284" width="14" height="4" fill="#6c6c6c" stroke="none"/><path d="M1241.500 284v4M1246.500 284v4" stroke="#cfcfcf" stroke-width=".8"/>
    <path d="M1267.500 283v3M1260 286.500h15M1262.500 287l-3 6.500h6zM1272.500 287l-3 6.500h6z" stroke-width="1.300" stroke="#d4d4d4"/><path d="M1259 294h7a3.500 2 0 0 1-7 0zM1269 294h7a3.500 2 0 0 1-7 0z" fill="#cfcfcf" stroke="none"/>
    <rect x="1284.500" y="283.500" width="15" height="12" fill="#6c6c6c"/><rect x="1292" y="284" width="7" height="11" fill="#c9c9c9" stroke="none"/>
    <path d="M1308.500 284.500h2l1-1.500h4l1 1.500h3v8h-11z" fill="#b8b8b8" stroke="#d6d6d6"/><circle cx="1318.500" cy="292.500" r="4.500" fill="#777" stroke="#dedede" stroke-width="1.300"/><circle cx="1318.500" cy="292.500" r="2" fill="#bdbdbd" stroke="none"/>
    <g stroke="none" fill="#d0d0d0"><circle cx="1339.500" cy="286.500" r="4"/><circle cx="1336" cy="292" r="4" fill="#b6b6b6"/><circle cx="1343" cy="292" r="4" fill="#c2c2c2"/><path d="M1339.500 288l2 2.500-2 2.500-2-2.500z" fill="#666"/></g>
    <rect x="1356.500" y="283.500" width="15" height="12" fill="#6a6a6a" stroke="#d8d8d8"/><path d="M1356.500 287.500h15M1356.500 291.500h15M1361.500 283.500v12M1366.500 283.500v12" stroke="#d8d8d8"/>
    <!-- row3 -->
    <rect x="1248.500" y="310.500" width="15" height="12" fill="url(#ag)"/><path d="M1251 320c2-6 6-8 10-7-1 5-5 8-10 7z" fill="#6e6e6e" stroke="none"/>
    <rect x="1272.500" y="310.500" width="15" height="12" fill="#8e8e8e"/><path d="M1273 322l14-11v5l-8 6z" fill="#c8c8c8" stroke="none"/>
    <rect x="1296.500" y="310.500" width="15" height="12" fill="#c0c0c0"/><path d="M1297 319l3-1 2-3 3 0 2-3 4-1v3l-3 2-2 3-3 0-2 2-4 1z" fill="#5c5c5c" stroke="none"/>
    <rect x="1320.500" y="310.500" width="15" height="12" fill="#a8a8a8"/><path d="M1321 311l7 5.500-7 5.500zM1335 311l-7 5.500 7 5.500z" fill="#7c7c7c" stroke="none"/>
    <rect x="1344.500" y="310.500" width="15" height="12" fill="url(#agh)"/>
  </g>
</svg>
<div class="psep" style="top:335px"></div>
<!-- ============ LAYERS PANEL ============ -->
<div class="ptabs" style="top:338px"></div>
<div class="ptab on" style="left:1199px;top:338px;width:37px">图层</div>
<div class="ptab off" style="left:1236px;top:338px;width:38px">通道</div>
<div class="ptab off" style="left:1274px;top:338px;width:37px">路径</div>
<svg class="pmenu" style="top:343px" viewBox="0 0 14 9"><path d="M0 1h5l-2.500 3.500z" fill="#d8d8d8"/><path d="M6 1.500h8M6 4.500h8M6 7.500h8" stroke="#d8d8d8" stroke-width="1.200"/></svg>
<!-- filter row -->
<div class="sel" style="left:1204px;top:360px;width:70px;height:19px;line-height:17px;padding-left:21px;font-size:12px">类型<span class="ud" style="right:4px"></span></div>
<svg class="abs" style="left:1207px;top:363px" width="14" height="14" viewBox="0 0 14 14"><circle cx="8" cy="5.500" r="3.300" fill="#8a8a8a" stroke="#d8d8d8" stroke-width="1.400"/><path d="M5.500 8l-3.500 3.500" stroke="#d8d8d8" stroke-width="2" stroke-linecap="round"/></svg>
<div class="vsep" style="left:1279px;top:359px;height:21px"></div>
<svg class="abs" style="left:1290px;top:358px" width="150" height="24" viewBox="1290 358 150 24">
  <rect x="1295.500" y="363.500" width="12" height="10" fill="#5e5e5e" stroke="#d6d6d6"/><path d="M1297 372l3-3.500 2 2 2-3 2.500 4.500z" fill="#d0d0d0"/><circle cx="1304.500" cy="366.500" r="1" fill="#d0d0d0"/>
  <circle cx="1325.500" cy="369" r="5" fill="#6a6a6a" stroke="#c8c8c8" stroke-width="1.200"/><path d="M1322 372.500a5 5 0 0 1 7-7z" fill="#d4d4d4"/>
  <text x="1349" y="375" font-family="Liberation Serif,serif" font-weight="bold" font-size="15" fill="#d0d0d0" text-anchor="middle">T</text>
  <rect x="1369.500" y="364.500" width="8" height="9" fill="none" stroke="#d0d0d0" stroke-width="1.200"/><g fill="#e0e0e0"><rect x="1368" y="363" width="3" height="3"/><rect x="1376" y="363" width="3" height="3"/><rect x="1368" y="372" width="3" height="3"/><rect x="1376" y="372" width="3" height="3"/></g>
  <path d="M1396.500 363.500h5l3 3v8h-8z" fill="#5e5e5e" stroke="#d0d0d0"/><rect x="1392" y="369" width="6" height="6" fill="#cdcdcd"/>
  <rect x="1426.500" y="361.500" width="8" height="16" rx="1.500" fill="#3a3a3a" stroke="#333"/><rect x="1427.500" y="362.500" width="6" height="6" rx="1" fill="#8a8a8a"/>
</svg>
<div class="abs" style="left:1199px;top:382px;width:241px;height:1px;background:#434343"></div>
<div class="abs" style="left:1199px;top:383px;width:241px;height:1px;background:#5c5c5c"></div>
<!-- blend row -->
<div class="sel" style="left:1204px;top:389px;width:109px;height:19px;line-height:17px;padding-left:8px;font-size:12px;color:#a8a8a8;background:linear-gradient(#5e5e5e,#525252);border-color:#434343;box-shadow:0 1px 0 #606060"><span style="letter-spacing:0">正常</span><span class="ud" style="right:4px;opacity:.6"></span></div>
<div class="lbl" style="left:1322px;top:391px;color:#b4b4b4;font-size:12px;letter-spacing:-.2px">不透明度:</div>
<div class="inp" style="left:1377px;top:388px;width:38px;height:20px;background:#4b4b4b;color:#6a6a6a;font-size:11px;line-height:18px;padding-left:6px">100%</div>
<div class="abs" style="left:1415px;top:388px;width:19px;height:20px;border:1px solid #434343;border-left:none;background:linear-gradient(#5f5f5f,#525252)"><i class="abs" style="left:5px;top:8px;border-left:4px solid transparent;border-right:4px solid transparent;border-top:4px solid #8a8a8a"></i></div>
<div class="abs" style="left:1199px;top:411px;width:241px;height:1px;background:#434343"></div>
<div class="abs" style="left:1199px;top:412px;width:241px;height:1px;background:#5c5c5c"></div>
<!-- lock row -->
<div class="lbl" style="left:1206px;top:419px;color:#a8a8a8;font-size:12px;letter-spacing:.2px">锁定:</div>
<svg class="abs" style="left:1240px;top:415px" width="90" height="22" viewBox="1240 415 90 22">
  <rect x="1243" y="420" width="11" height="11" fill="#6a6a6a"/><g fill="#8e8e8e"><rect x="1243" y="420" width="4" height="4"/><rect x="1250" y="420" width="4" height="4"/><rect x="1246.500" y="423.500" width="4" height="4"/><rect x="1243" y="427" width="4" height="4"/><rect x="1250" y="427" width="4" height="4"/></g>
  <path d="M1278 418.500l1.500 1.500-6.500 7.500-2-1.500z" fill="#8a8a8a"/><path d="M1265 431c2.500-.5 3.500-2.500 5.500-4.500l2 2c-1.500 2.500-4.500 3.500-7.500 2.500z" fill="#8a8a8a"/>
  <path d="M1293.500 419v13M1287 425.500h13" stroke="#868686" stroke-width="1.300" fill="none"/><path d="M1293.500 417.500l2.300 2.800h-4.600zM1293.500 433.500l2.300-2.800h-4.600zM1285.500 425.500l2.800-2.300v4.600zM1301.500 425.500l-2.800-2.300v4.600z" fill="#868686"/>
  <rect x="1310.500" y="424.500" width="10" height="7" fill="#8a8a8a"/><path d="M1312.500 424.500v-2.500a3 3 0 0 1 6 0v2.500" stroke="#8a8a8a" stroke-width="1.500" fill="none"/>
</svg>
<div class="lbl" style="left:1347px;top:419px;color:#b4b4b4;font-size:12px;letter-spacing:-.5px">填充:</div>
<div class="inp" style="left:1377px;top:416px;width:38px;height:20px;background:#4b4b4b;color:#6a6a6a;font-size:11px;line-height:18px;padding-left:6px">100%</div>
<div class="abs" style="left:1415px;top:416px;width:19px;height:20px;border:1px solid #434343;border-left:none;background:linear-gradient(#5f5f5f,#525252)"><i class="abs" style="left:5px;top:8px;border-left:4px solid transparent;border-right:4px solid transparent;border-top:4px solid #8a8a8a"></i></div>
<!-- layer list -->
<div class="abs" style="left:1199px;top:441px;width:241px;height:398px;background:#474747;border-top:1px solid #3c3c3c"></div>
<div class="abs" style="left:1424px;top:442px;width:16px;height:397px;background:linear-gradient(90deg,#3a3a3a,#434343 6px,#454545);border-left:1px solid #3c3c3c"></div>
<!-- layer 1 -->
<div class="abs" style="left:1199px;top:442px;width:225px;height:27px;background:#535353;border-bottom:1px solid #3f3f3f"></div>
<div class="abs" style="left:1228px;top:442px;width:1px;height:56px;background:#434343"></div>
<div class="abs" style="left:1234px;top:446px;width:31px;height:20px;border:1px solid #1a1a1a;background-color:#fff;background-image:linear-gradient(45deg,#ccc 25%,transparent 25%,transparent 75%,#ccc 75%),linear-gradient(45deg,#ccc 25%,transparent 25%,transparent 75%,#ccc 75%);background-size:8px 8px;background-position:0 0,4px 4px"></div>
<div class="lbl" style="left:1274px;top:449px;color:#f4f4f4;font-size:12px">图层 1</div>
<!-- background layer -->
<div class="abs" style="left:1199px;top:470px;width:30px;height:28px;background:#535353"></div>
<div class="abs" style="left:1229px;top:470px;width:195px;height:28px;background:#596a86"></div>
<div class="abs" style="left:1199px;top:498px;width:225px;height:1px;background:#3f3f3f"></div>
<svg class="abs" style="left:1230px;top:470px" width="40" height="28" viewBox="1230 470 40 28">
  <rect x="1234.500" y="474.500" width="30" height="19" fill="#fff" stroke="#111"/>
  <g><ellipse cx="1242" cy="481" rx="4" ry="3" fill="#4e9a2e"/><ellipse cx="1243" cy="488" rx="3" ry="2.500" fill="#5aa536"/><ellipse cx="1256" cy="480" rx="3.500" ry="3" fill="#3f8a25"/><ellipse cx="1258.500" cy="484" rx="2.500" ry="2.500" fill="#4b942c"/><ellipse cx="1252" cy="491" rx="4" ry="1.500" fill="#4b942c"/>
  <ellipse cx="1250.500" cy="481" rx="4.500" ry="4" fill="#e23a2a"/><ellipse cx="1247" cy="487" rx="5" ry="5" fill="#e8321f"/><ellipse cx="1255" cy="487" rx="4" ry="4.500" fill="#cf3a32"/></g>
  <path d="M1232.500 478v-5.500h8M1259 472.500h8v5.500M1267 490v5.500h-8M1240.500 495.500h-8v-5.500" fill="none" stroke="#f6f6f6" stroke-width="1.300"/>
</svg>
<div class="lbl" style="left:1277px;top:477px;color:#f4f4f4;font-size:11.500px;font-style:italic;transform:skewX(-8deg)">背景</div>
<svg class="abs" style="left:1396px;top:477px" width="13" height="14" viewBox="0 0 13 14"><rect x="1.500" y="6.500" width="10" height="7" fill="#61718c" stroke="#e0e0e0"/><path d="M3.500 6.500v-2.500a3 3 0 0 1 6 0v2.500" stroke="#e0e0e0" stroke-width="1.200" fill="none"/><rect x="6" y="9" width="1.200" height="2.500" fill="#e0e0e0"/></svg>
<!-- eyes -->
<svg class="abs" style="left:1205px;top:448px" width="18" height="44" viewBox="0 0 18 44">
  <g id="eye"><path d="M2.500 7.500c2.500-4.200 10.500-4.200 13 0-2.500 3.800-10.500 3.800-13 0z" fill="#a4a4a4"/><circle cx="9" cy="7" r="2.600" fill="#3c3c3c"/><circle cx="9.700" cy="6.300" r=".9" fill="#c8c8c8"/></g>
  <use href="#eye" y="28"/>
</svg>
<!-- bottom bar -->
<div class="abs" style="left:1199px;top:839px;width:241px;height:18px;background:#535353;border-top:1px solid #3a3a3a"></div>
<svg class="abs" style="left:1230px;top:842px" width="190" height="15" viewBox="1230 842 190 15">
  <g fill="none" stroke="#8e8e8e" stroke-width="1.500"><rect x="1236" y="847.500" width="8" height="5" rx="2.500"/><rect x="1242" y="847.500" width="8" height="5" rx="2.500"/></g>
  <text x="1270" y="855" font-family="Liberation Serif,serif" font-style="italic" font-size="13" fill="#8a8a8a" text-anchor="middle">fx</text>
  <rect x="1290.500" y="845.500" width="13" height="10" fill="#c4c4c4"/><circle cx="1297" cy="850.500" r="3" fill="#535353"/>
  <circle cx="1324" cy="850" r="5" fill="#6a6a6a" stroke="#c8c8c8" stroke-width="1.200"/><path d="M1320.500 853.500a5 5 0 0 1 7-7z" fill="#d4d4d4"/><path d="M1331 855h3l-1.500 2z" fill="#ddd"/>
  <path d="M1345 846h5l1.500 1.500h6v8.500h-12.500z" fill="#c4c4c4"/>
  <path d="M1373 846h9v10h-6.500l-2.500-2.500z" fill="#c4c4c4"/><path d="M1372 851h4v4" fill="none" stroke="#535353" stroke-width="1.200"/>
  <path d="M1399.500 848.500h10l-1 8h-8z" fill="none" stroke="#c4c4c4" stroke-width="1.300"/><path d="M1398.500 847.500h12M1402.500 847v-1.500h4v1.500M1403 850v5M1406 850v5" stroke="#c4c4c4" stroke-width="1.200" fill="none"/>
</svg>
<div id="filemenu">
<div class="it" style="top:3px">新建(N)...</div><div class="sc" style="top:3px">Ctrl+N</div>
<div class="it" style="top:24px">打开(O)...</div><div class="sc" style="top:24px">Ctrl+O</div>
<div class="it" style="top:45px">在 <span class="l">Bridge</span> 中浏览(B)...</div><div class="sc" style="top:45px">Alt+Ctrl+O</div>
<div class="it" style="top:66px">在 <span class="l">Mini Bridge</span> 中浏览(G)...</div>
<div class="it" style="top:87px">打开为...</div><div class="sc" style="top:87px">Alt+Shift+Ctrl+O</div>
<div class="it" style="top:108px">打开为智能对象...</div>
<div class="it" style="top:130px">最近打开文件(T)</div><div class="arr" style="top:133px"></div>
<div class="sep" style="top:152px"></div>
<div class="it" style="top:159px">关闭(C)</div><div class="sc" style="top:159px">Ctrl+W</div>
<div class="it" style="top:180px">关闭全部</div><div class="sc" style="top:180px">Alt+Ctrl+W</div>
<div class="it" style="top:201px">关闭并转到 <span class="l">Bridge</span>...</div><div class="sc" style="top:201px">Shift+Ctrl+W</div>
<div class="it" style="top:222px">存储(S)</div><div class="sc" style="top:222px">Ctrl+S</div>
<div class="it" style="top:243px">存储为(A)...</div><div class="sc" style="top:243px">Shift+Ctrl+S</div>
<div class="it" style="top:264px;color:#8e8e8e">签入(I)...</div>
<div class="it" style="top:285px">存储为 <span class="l">Web</span> 所用格式...</div><div class="sc" style="top:285px">Alt+Shift+Ctrl+S</div>
<div class="it" style="top:306px">恢复(V)</div><div class="sc" style="top:306px">F12</div>
<div class="sep" style="top:329px"></div>
<div class="it" style="top:336px">置入(L)...</div>
<div class="sep" style="top:359px"></div>
<div class="it" style="top:367px">导入(M)</div><div class="arr" style="top:370px"></div>
<div class="it" style="top:388px">导出(E)</div><div class="arr" style="top:391px"></div>
<div class="sep" style="top:410px"></div>
<div class="it" style="top:418px">自动(U)</div><div class="arr" style="top:421px"></div>
<div class="it" style="top:439px">脚本(R)</div><div class="arr" style="top:442px"></div>
<div class="sep" style="top:461px"></div>
<div class="it" style="top:468px">文件简介(F)...</div><div class="sc" style="top:468px">Alt+Shift+Ctrl+I</div>
<div class="sep" style="top:491px"></div>
<div class="it" style="top:498px">打印(P)...</div><div class="sc" style="top:498px">Ctrl+P</div>
<div class="it" style="top:519px">打印一份(Y)</div><div class="sc" style="top:519px">Alt+Shift+Ctrl+P</div>
<div class="sep" style="top:542px"></div>
<div class="it" style="top:549px">退出(X)</div><div class="sc" style="top:549px">Ctrl+Q</div>
</div>
<!-- red annotations -->
<div class="abs" style="left:43px;top:-3px;width:45px;height:35px;border:3px solid #e8231c;border-radius:3px"></div>
<div class="abs" style="left:47px;top:265px;width:92px;height:26px;border:2.500px solid #e8231c;border-radius:3px"></div>
<svg class="abs" style="left:165px;top:266px" width="85" height="26" viewBox="165 266 85 26"><path d="M172 280.300L188 271.500L187 275L244.500 277.800L244.500 279.300L187 284L188.500 288Z" fill="#e8251d"/></svg>
</body>
</html>
